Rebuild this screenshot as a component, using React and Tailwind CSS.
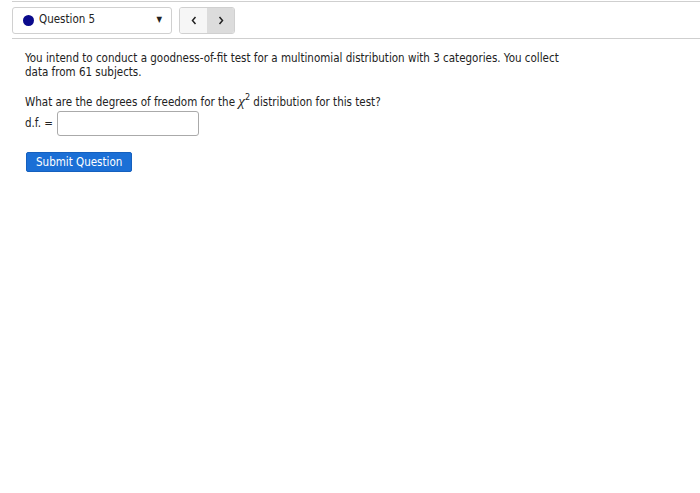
export default function App() {
  return (
    <div className="min-h-[493px] bg-white text-[11.5px] text-[#222] font-['DejaVu_Sans_Condensed','Liberation_Sans',sans-serif]">
      {/* top bar */}
      <div className="ml-[12px] mt-[1px] border-y border-[#cfcfcf] h-[38px] flex items-center gap-[7px]">
        <div className="w-[160px] h-[27px] border border-[#d0d0d0] rounded-[3px] flex items-center pl-[10px] pr-[9px]">
          <span className="w-[11px] h-[11px] rounded-full bg-[#0a0a8c] mr-[5px]" />
          <span className="flex-1">Question 5</span>
          <span className="text-[8px] leading-none">▼</span>
        </div>
        <div className="flex h-[27px] border border-[#d0d0d0] rounded-[3px] overflow-hidden">
          <button className="w-[27px] bg-[#f6f6f6] flex items-center justify-center">
            <svg width="6" height="9" viewBox="0 0 6 9" fill="none" stroke="#222" strokeWidth="1.5">
              <path d="M4.5 1 L1.5 4.5 L4.5 8" />
            </svg>
          </button>
          <button className="w-[27px] bg-[#dcdcdc] flex items-center justify-center">
            <svg width="6" height="9" viewBox="0 0 6 9" fill="none" stroke="#222" strokeWidth="1.5">
              <path d="M1.5 1 L4.5 4.5 L1.5 8" />
            </svg>
          </button>
        </div>
      </div>

      {/* question body */}
      <div className="pl-[25px] pt-[12px] pr-[120px]">
        <p className="leading-[14px]">
          You intend to conduct a goodness-of-fit test for a multinomial distribution with 3 categories. You collect data from 61 subjects.
        </p>
        <p className="mt-[15px] leading-[14px]">
          What are the degrees of freedom for the{" "}
          <span className="font-['Liberation_Serif',serif] italic text-[15px]">χ</span>
          <sup className="text-[9px] align-super relative -top-[1px]">2</sup> distribution for this test?
        </p>
        <div className="flex items-center mt-[2px]">
          <span>d.f. =</span>
          <input className="ml-[4px] w-[142px] h-[25px] border border-[#aaa] rounded-[3px] outline-none px-1" />
        </div>
        <button className="mt-[16px] ml-[1px] bg-[#1b6fd6] text-white px-[9px] h-[20px] rounded-[2px] leading-[18px] border border-[#1560be]">
          Submit Question
        </button>
      </div>
    </div>
  );
}
